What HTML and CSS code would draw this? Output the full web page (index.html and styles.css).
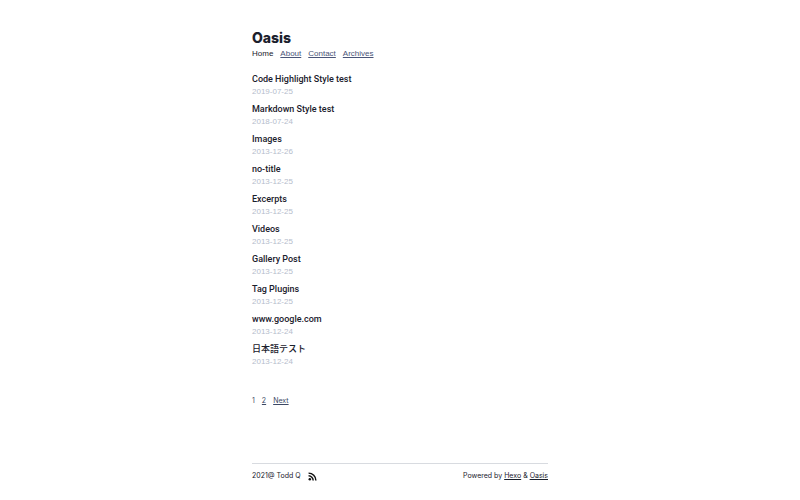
FILE: index.html
```html
<!DOCTYPE html>
<html lang="en">
<head>
<meta charset="utf-8">
<meta name="viewport" content="width=device-width, initial-scale=1">
<title>Oasis</title>
<link rel="stylesheet" href="styles.css">
</head>
<body>
<div class="page">
<header>
<h1 class="site-title">Oasis</h1>
<nav class="nav">
<a class="current" href="#">Home</a>
<a href="#">About</a>
<a href="#">Contact</a>
<a href="#">Archives</a>
</nav>
</header>
<main>
<ul class="posts">
<li><a href="#">Code Highlight Style test</a><time>2019-07-25</time></li>
<li><a href="#">Markdown Style test</a><time>2018-07-24</time></li>
<li><a href="#">Images</a><time>2013-12-26</time></li>
<li><a href="#">no-title</a><time>2013-12-25</time></li>
<li><a href="#">Excerpts</a><time>2013-12-25</time></li>
<li><a href="#">Videos</a><time>2013-12-25</time></li>
<li><a href="#">Gallery Post</a><time>2013-12-25</time></li>
<li><a href="#">Tag Plugins</a><time>2013-12-25</time></li>
<li><a href="#">www.google.com</a><time>2013-12-24</time></li>
<li><a href="#" lang="ja">日本語テスト</a><time>2013-12-24</time></li>
</ul>
<div class="pager"><span>1</span><a href="#">2</a><a href="#">Next</a></div>
</main>
<footer class="footer">
<div class="owner"><span>2021@ Todd Q</span>
<a class="feed" href="#" aria-label="RSS feed"><svg viewBox="0 0 16 16" fill="none" stroke="currentColor" stroke-width="2.6"><circle cx="3.2" cy="12.8" r="2.2" fill="currentColor" stroke="none"/><path d="M1 6.8A8.2 8.2 0 0 1 9.2 15M1 2A13 13 0 0 1 14 15"/></svg></a></div>
<div>Powered by <a href="#">Hexo</a> &amp; <a href="#">Oasis</a></div>
</footer>
</div>
</body>
</html>
```
FILE: styles.css
```css
* { box-sizing: border-box; }
body {
  margin: 0;
  background: #fff;
  color: #1a202c;
  font: 7px/12px Inter, "Noto Sans CJK JP", sans-serif;
}
a { color: inherit; }
.page {
  display: flex;
  flex-direction: column;
  min-height: 100vh;
  max-width: 296px;
  margin: 0 auto;
  padding: 28px 0 18px;
}
.site-title { margin: 0; color: #1a202c; font-size: 14px; line-height: 20px; font-weight: 800; }
.nav, .pager { display: flex; gap: 7px; }
.nav { font: 8px/12px "Liberation Sans", sans-serif; }
.nav a { color: #4a5578; }
.pager { color: #3c4864; }
.nav .current { color: #1a202c; text-decoration: none; }
.posts { list-style: none; margin: 12px 0 0; padding: 0; }
.posts li { display: flex; flex-direction: column; height: 30px; }
.posts a {
  color: #1a202c;
  font: 500 9px/14px Roboto, "Noto Sans CJK JP", sans-serif;
  text-decoration: none;
}
.posts time { color: #b5bdcc; font: 8px/12px "Liberation Sans", sans-serif; }
.pager { margin-top: 23px; }
.footer { display: flex; justify-content: space-between; margin-top: auto; padding-top: 6px; border-top: 1px solid #d8dbe0; }
.owner { display: flex; gap: 7px; }
.feed { display: flex; align-items: center; color: #111; }
.feed svg { width: 9px; height: 9px; }
```
